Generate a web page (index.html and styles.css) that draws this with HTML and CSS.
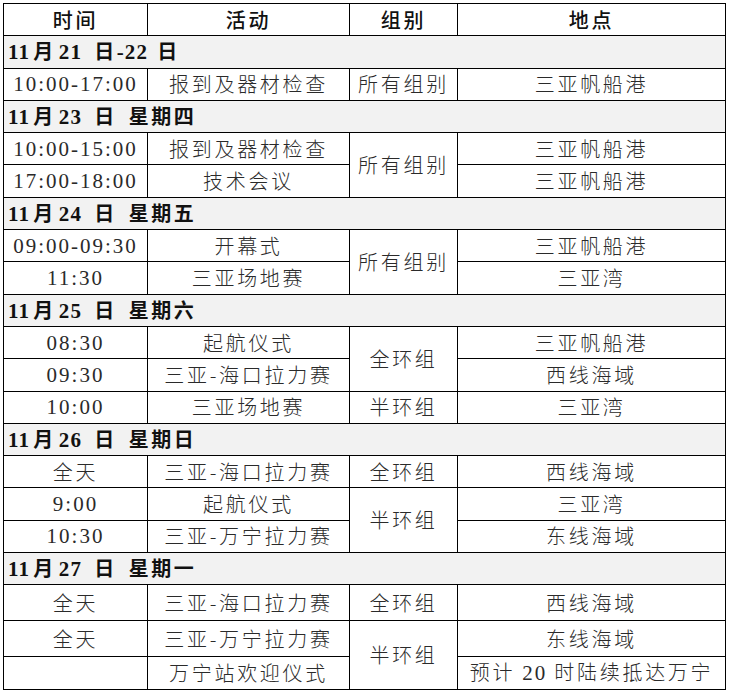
FILE: index.html
```html
<!DOCTYPE html>
<html lang="zh-CN">
<head>
<meta charset="utf-8">
<title>赛程安排</title>
<link rel="stylesheet" href="styles.css">
</head>
<body>
<table class="schedule">
  <colgroup>
    <col class="c-time">
    <col class="c-act">
    <col class="c-grp">
    <col class="c-loc">
  </colgroup>
  <thead>
    <tr class="head"><th>时间</th><th>活动</th><th>组别</th><th>地点</th></tr>
  </thead>
  <tbody>
    <tr class="day"><td colspan="4"><span class="num">11</span><span class="sx"></span>月<span class="sx"></span><span class="num">21</span><span class="sp"></span>日<span class="num">-22</span><span class="sp2"></span>日</td></tr>
    <tr><td class="num">10:00-17:00</td><td>报到及器材检查</td><td>所有组别</td><td>三亚帆船港</td></tr>

    <tr class="day"><td colspan="4"><span class="num">11</span><span class="sx"></span>月<span class="sx"></span><span class="num">23</span><span class="sp"></span>日<span class="sp"></span>星期四</td></tr>
    <tr><td class="num">10:00-15:00</td><td>报到及器材检查</td><td rowspan="2">所有组别</td><td>三亚帆船港</td></tr>
    <tr><td class="num">17:00-18:00</td><td>技术会议</td><td>三亚帆船港</td></tr>

    <tr class="day"><td colspan="4"><span class="num">11</span><span class="sx"></span>月<span class="sx"></span><span class="num">24</span><span class="sp"></span>日<span class="sp"></span>星期五</td></tr>
    <tr><td class="num">09:00-09:30</td><td>开幕式</td><td rowspan="2">所有组别</td><td>三亚帆船港</td></tr>
    <tr><td class="num">11:30</td><td>三亚场地赛</td><td>三亚湾</td></tr>

    <tr class="day"><td colspan="4"><span class="num">11</span><span class="sx"></span>月<span class="sx"></span><span class="num">25</span><span class="sp"></span>日<span class="sp"></span>星期六</td></tr>
    <tr><td class="num">08:30</td><td>起航仪式</td><td rowspan="2">全环组</td><td>三亚帆船港</td></tr>
    <tr><td class="num">09:30</td><td>三亚-海口拉力赛</td><td>西线海域</td></tr>
    <tr><td class="num">10:00</td><td>三亚场地赛</td><td>半环组</td><td>三亚湾</td></tr>

    <tr class="day"><td colspan="4"><span class="num">11</span><span class="sx"></span>月<span class="sx"></span><span class="num">26</span><span class="sp"></span>日<span class="sp"></span>星期日</td></tr>
    <tr><td>全天</td><td>三亚-海口拉力赛</td><td>全环组</td><td>西线海域</td></tr>
    <tr><td class="num">9:00</td><td>起航仪式</td><td rowspan="2">半环组</td><td>三亚湾</td></tr>
    <tr><td class="num">10:30</td><td>三亚-万宁拉力赛</td><td>东线海域</td></tr>

    <tr class="day"><td colspan="4"><span class="num">11</span><span class="sx"></span>月<span class="sx"></span><span class="num">27</span><span class="sp"></span>日<span class="sp"></span>星期一</td></tr>
    <tr class="tall"><td>全天</td><td>三亚-海口拉力赛</td><td>全环组</td><td>西线海域</td></tr>
    <tr class="tall"><td>全天</td><td>三亚-万宁拉力赛</td><td rowspan="2">半环组</td><td>东线海域</td></tr>
    <tr><td></td><td>万宁站欢迎仪式</td><td>预计 <span class="num">20</span> 时陆续抵达万宁</td></tr>
  </tbody>
</table>
</body>
</html>
```

FILE: styles.css
```css
html, body {
  margin: 0;
  padding: 0;
  background: #ffffff;
}

body {
  padding: 3px 0 0 3px;
}

.schedule {
  border-collapse: collapse;
  table-layout: fixed;
  width: 722px;
  font-family: "Noto Sans CJK SC", sans-serif;
  font-size: 20px;
  color: #2a2a2a;
}

.c-time { width: 144px; }
.c-act { width: 202px; }
.c-grp { width: 108px; }
.c-loc { width: 268px; }

.schedule th,
.schedule td {
  border: 1px solid #000;
  height: 31.3px;
  padding: 0;
  text-align: center;
  vertical-align: middle;
  letter-spacing: 2.7px;
  font-weight: 300;
  line-height: 22px;
  white-space: nowrap;
}

.schedule td.num,
.schedule .num {
  font-family: "Liberation Serif", "Times New Roman", serif;
  font-size: 21px;
  font-weight: 400;
  letter-spacing: 2px;
}

.schedule .head th {
  font-weight: 500;
  color: #111;
  background: #fff;
}

.schedule .day td {
  background: #f2f2f2;
  text-align: left;
  font-weight: 700;
  color: #111;
  letter-spacing: 2.5px;
  padding-left: 4px;
}

.schedule .day .num {
  font-weight: 700;
  font-size: 21px;
  letter-spacing: 1.2px;
}

.sx {
  display: inline-block;
  width: 3px;
}

.sp {
  display: inline-block;
  width: 12px;
}

.sp2 {
  display: inline-block;
  width: 9px;
}

.schedule .tall td {
  height: 35px;
}
```
